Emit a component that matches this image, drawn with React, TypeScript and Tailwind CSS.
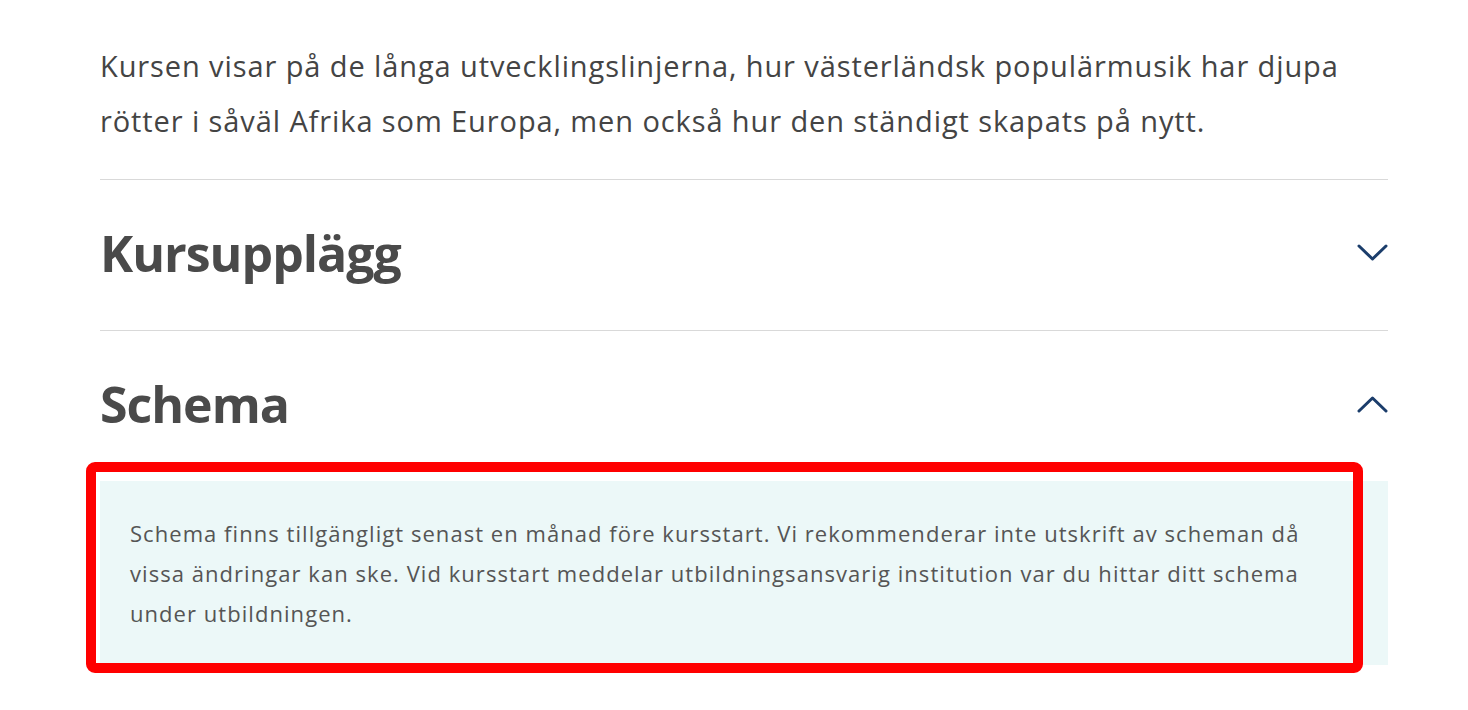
import { useState } from 'react'

const Chevron = ({ up }: { up?: boolean }) => (
  <svg
    width="31"
    height="18"
    viewBox="0 0 31 18"
    fill="none"
    className={up ? 'rotate-180' : ''}
  >
    <polyline
      points="2,2 15.5,15 29,2"
      stroke="#1b3d6b"
      strokeWidth="3"
      strokeLinecap="round"
      strokeLinejoin="round"
    />
  </svg>
)

const sections = [
  {
    title: 'Kursupplägg',
    body: '',
  },
  {
    title: 'Schema',
    body: 'Schema finns tillgängligt senast en månad före kursstart. Vi rekommenderar inte utskrift av scheman då vissa ändringar kan ske. Vid kursstart meddelar utbildningsansvarig institution var du hittar ditt schema under utbildningen.',
  },
]

const App = () => {
  const [open, setOpen] = useState<number | null>(1)

  return (
    <div className="min-h-[710px] bg-white pl-[100px] pr-[80px] pt-[38px] font-['Open_Sans',sans-serif] text-[#444]">
      <p className="text-[29px] leading-[55px] tracking-[0.9px]">
        Kursen visar på de långa utvecklingslinjerna, hur västerländsk
        populärmusik har djupa rötter i såväl Afrika som Europa, men också hur
        den ständigt skapats på nytt.
      </p>
      <div className="mt-[31px]">
        {sections.map((section, index) => (
          <div key={section.title} className="border-t border-[#d9d9d9]">
            <button
              type="button"
              onClick={() => setOpen(open === index ? null : index)}
              className="flex w-full items-center justify-between pb-[46px] pt-[42px] text-left"
            >
              <h2 className="text-[50px] font-bold leading-[62px] tracking-[-1px] text-[#4a4a4a]">
                {section.title}
              </h2>
              <Chevron up={open === index} />
            </button>
            {open === index && section.body && (
              <div className="relative">
                <div className="bg-[#ecf8f8] pb-[32px] pl-[30px] pr-[60px] pt-[32px] text-[22px] leading-[40px] tracking-[1.05px] text-[#555]">
                  {section.body}
                </div>
                <div className="pointer-events-none absolute bottom-[-8px] left-[-14px] right-[25px] top-[-19px] rounded-[9px] border-[10px] border-[#ff0000]" />
              </div>
            )}
          </div>
        ))}
      </div>
    </div>
  )
}

export default App
